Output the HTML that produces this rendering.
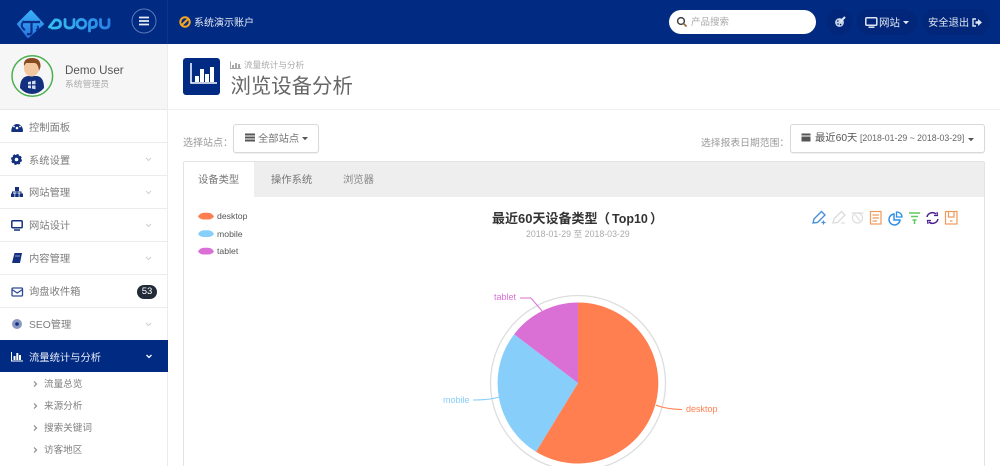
<!DOCTYPE html>
<html lang="zh"><head><meta charset="utf-8"><style>
*{box-sizing:border-box}
html,body{margin:0;padding:0;width:1000px;height:466px;overflow:hidden;background:#fff}
body{font-family:"Liberation Sans","Noto Sans CJK SC",sans-serif;position:relative;color:#666;font-size:10.3px}
.a{position:absolute;white-space:nowrap}
svg{position:absolute;overflow:visible}
.top{left:0;top:0;width:1000px;height:44px;background:#012a82}
.row{position:absolute;left:0;width:167px;height:33px;border-bottom:1px solid #ececec}
.row .t{position:absolute;left:29px;top:10px;font-size:10.3px;line-height:15px;color:#7d7d7d;white-space:nowrap}
.row svg{left:0;top:0}
.sub{position:absolute;left:44px;font-size:9.6px;line-height:14px;color:#808080;white-space:nowrap}
.pill{position:absolute;background:#02277a;border-radius:14px;height:26px;top:9px}
.btn{position:absolute;background:#fff;border:1px solid #d8d8d8;border-radius:3px;box-shadow:0 1px 1px rgba(0,0,0,.06)}
</style></head><body>
<div class="a top"></div>
<div class="a" style="left:167px;top:0;width:1px;height:44px;background:#123684"></div>
<!-- logo -->
<svg style="left:0;top:0" width="168" height="44">
<defs>
<linearGradient id="lg" gradientUnits="userSpaceOnUse" x1="48" y1="0" x2="110" y2="0"><stop offset="0" stop-color="#35c4f2"/><stop offset="1" stop-color="#2a7fe8"/></linearGradient>
<linearGradient id="dg" gradientUnits="userSpaceOnUse" x1="31" y1="10" x2="29" y2="38"><stop offset="0" stop-color="#38b2f6"/><stop offset="1" stop-color="#2a74e4"/></linearGradient>
</defs>
<path d="M31 11 L43 24 L28 37 L18 24 Z" fill="url(#dg)" stroke="url(#dg)" stroke-width="2" stroke-linejoin="round"/>
<path d="M24 22 H40 M31.500 22 V32 Q31.500 35 27 34" fill="none" stroke="#0a2f88" stroke-width="2.200"/>
<path d="M24 21 Q19 26 25 30" fill="none" stroke="#0a2f88" stroke-width="2"/>
<path d="M37 26 Q40 28 36 30" fill="none" stroke="#0a2f88" stroke-width="1.600"/>
<g fill="none" stroke="url(#lg)" stroke-width="2.800" stroke-linecap="round" stroke-linejoin="round">
<path d="M49.500 27 L55 20 Q60.500 19.500 60.500 24 Q60.500 28 55 28 H52"/>
<path d="M65 19.500 V24 Q65 28 69.500 28 Q74 28 74 24 V19.500"/>
<circle cx="81.500" cy="23.800" r="4.400"/>
<path d="M89.500 31 V24 Q89.500 19.500 93 19.500 Q96.500 19.500 96.500 23.500 Q96.500 27.500 92 27.500"/>
<path d="M100.500 19.500 V24 Q100.500 28 105 28 Q109 28 109 24 V19.500"/>
</g>
<circle cx="144" cy="21" r="12" fill="none" stroke="#5a78b8" stroke-width="1"/>
<path d="M139 17.500 H149 M139 21 H149 M139 24.500 H149" stroke="#e8eefa" stroke-width="1.800"/>
</svg>
<!-- warning -->
<svg style="left:179px;top:16px" width="12" height="12"><circle cx="6" cy="6" r="4.700" fill="none" stroke="#f5a623" stroke-width="2"/><path d="M3 9 L9 3" stroke="#f5a623" stroke-width="2"/></svg>
<div class="a" style="left:194px;top:16px;font-size:10px;line-height:15px;color:#e4e9f4">系统演示账户</div>
<!-- search -->
<div class="a" style="left:669px;top:10px;width:147px;height:24px;background:#fff;border-radius:12px"></div>
<svg style="left:676px;top:16px" width="12" height="12"><circle cx="5" cy="5" r="3.400" fill="none" stroke="#444" stroke-width="1.500"/><path d="M7.500 7.500 L10.500 10.500" stroke="#9a6a3a" stroke-width="1.800"/></svg>
<div class="a" style="left:691px;top:16px;font-size:9.500px;line-height:14px;color:#aaa">产品搜索</div>
<div class="pill" style="left:826px;width:26px"></div>
<div class="pill" style="left:857px;width:60px"></div>
<div class="pill" style="left:922px;width:68px"></div>
<svg style="left:834px;top:16px" width="12" height="12"><circle cx="5.500" cy="6.500" r="4.400" fill="#c5d2e8"/><path d="M6 6 L11 1" stroke="#dfe6f3" stroke-width="2"/><circle cx="3.800" cy="5" r=".8" fill="#02246f"/><circle cx="4" cy="8" r=".8" fill="#02246f"/><circle cx="6.600" cy="8.600" r=".8" fill="#02246f"/></svg>
<svg style="left:865px;top:17px" width="13" height="12"><rect x=".8" y=".8" width="11" height="7.500" rx="1" fill="none" stroke="#dfe6f3" stroke-width="1.500"/><path d="M3.500 10.200 H9.500" stroke="#dfe6f3" stroke-width="1.500"/></svg>
<div class="a" style="left:879px;top:16px;font-size:10.500px;line-height:15px;color:#dfe6f3">网站</div>
<svg style="left:903px;top:21px" width="6" height="4"><path d="M0 0 H6 L3 3.200Z" fill="#dfe6f3"/></svg>
<div class="a" style="left:928px;top:16px;font-size:10.300px;line-height:15px;color:#dfe6f3">安全退出</div>
<svg style="left:972px;top:18px" width="10" height="10"><path d="M4 1 H1 V8 H4" fill="none" stroke="#dfe6f3" stroke-width="1.400"/><path d="M3.500 3.200 H6 V1 L10 4.500 L6 8 V5.800 H3.500Z" fill="#dfe6f3"/></svg>

<!-- sidebar -->
<div class="a" style="left:0;top:44px;width:167px;height:66px;background:#f6f6f6;border-bottom:1px solid #e8e8e8"></div>
<div class="a" style="left:167px;top:44px;width:1px;height:422px;background:#ececec"></div>
<svg style="left:11px;top:55px" width="43" height="43">
<path d="M9 33 Q9 22 17 21 H26 Q33 22 33 33 Q28 39 21 39 Q14 39 9 33Z" fill="#12307f"/>
<ellipse cx="20.500" cy="13" rx="7.500" ry="8.500" fill="#f3c79f"/>
<path d="M13 11 Q12 3 21 3 Q30 3 29.500 12 L28 16 Q27.500 9 24 8 H15Z" fill="#8a4a20"/>
<path d="M17 27 l3 -.6 v3 h-3z M21 26.200 l3.500 -.7 v3.700 h-3.500z M17 30.500 h3 v3 l-3 -.6z M21 30.500 h3.500 v3.800 l-3.500 -.7z" fill="#d4def0"/>
<circle cx="21.300" cy="21" r="20.300" fill="none" stroke="#4cb050" stroke-width="1.500"/>
</svg>
<div class="a" style="left:65px;top:63px;font-size:11.600px;line-height:15px;color:#555">Demo User</div>
<div class="a" style="left:65px;top:77px;font-size:8.800px;line-height:14px;color:#aaa">系统管理员</div>

<div class="row" style="top:110px"><div class="t" style="top:11px">控制面板</div><svg width="30" height="33"><path d="M11.500 22 A5.800 6.500 0 1 1 22.800 22Z" fill="#12307f"/><circle cx="17" cy="18" r="1.300" fill="#fff"/><circle cx="14" cy="16.500" r=".9" fill="#fff"/><circle cx="20" cy="16.500" r=".9" fill="#fff"/></svg></div>
<div class="row" style="top:143px"><div class="t" style="top:11px">系统设置</div><svg width="168" height="33"><circle cx="16.500" cy="16.500" r="3.300" fill="none" stroke="#12307f" stroke-width="3"/><circle cx="16.500" cy="16.500" r="4.700" fill="none" stroke="#12307f" stroke-width="1.600" stroke-dasharray="2 1.700"/><path d="M146 15 L148.500 17.500 L151 15" fill="none" stroke="#d0d0d0"/></svg></div>
<div class="row" style="top:176px"><div class="t">网站管理</div><svg width="168" height="33"><rect x="15" y="11" width="4" height="4" fill="#12307f"/><rect x="11" y="17.500" width="3.500" height="3.500" fill="#12307f"/><rect x="15.200" y="17.500" width="3.500" height="3.500" fill="#12307f"/><rect x="19.500" y="17.500" width="3.500" height="3.500" fill="#12307f"/><path d="M12.500 17.500 V16 H21 V17.500 M17 15 V17.500" stroke="#12307f" fill="none"/><path d="M146 15 L148.500 17.500 L151 15" fill="none" stroke="#d0d0d0"/></svg></div>
<div class="row" style="top:209px"><div class="t">网站设计</div><svg width="168" height="33"><rect x="11.800" y="11.700" width="10.400" height="7" rx="1" fill="none" stroke="#12307f" stroke-width="1.500"/><path d="M14 21 H20" stroke="#12307f" stroke-width="1.500"/><path d="M146 15 L148.500 17.500 L151 15" fill="none" stroke="#d0d0d0"/></svg></div>
<div class="row" style="top:242px"><div class="t">内容管理</div><svg width="168" height="33"><path d="M14.500 11 H22 L20 21 H12Z" fill="#12307f"/><path d="M15 14 H20" stroke="#8fa2cf"/><path d="M146 15 L148.500 17.500 L151 15" fill="none" stroke="#d0d0d0"/></svg></div>
<div class="row" style="top:275px"><div class="t">询盘收件箱</div><svg width="30" height="33"><rect x="12" y="13" width="10.500" height="8" rx="1" fill="none" stroke="#2c4a94" stroke-width="1.300"/><path d="M12 14.500 L17.200 18 L22.500 14.500" fill="none" stroke="#2c4a94" stroke-width="1.200"/></svg></div>
<div class="a" style="left:137px;top:285px;width:20px;height:14px;border-radius:7px;background:#222b38;color:#fff;font-size:9.500px;line-height:14px;text-align:center">53</div>
<div class="row" style="top:308px;height:32px;border-bottom:0"><div class="t">SEO管理</div><svg width="168" height="33"><circle cx="17" cy="16" r="5" fill="#8a99c2"/><circle cx="17" cy="16" r="1.800" fill="#12307f"/><path d="M146 15 L148.500 17.500 L151 15" fill="none" stroke="#d0d0d0"/></svg></div>
<div class="a" style="left:0;top:340px;width:168px;height:32px;background:#012a82"></div>
<svg style="left:0;top:340px" width="168" height="32"><path d="M11.500 12 V21 H23" fill="none" stroke="#fff" stroke-width="1"/><path d="M13.500 16h2v4h-2zM16.300 13h2v7h-2zM19 15h2v5h-2z" fill="#fff"/><path d="M146.500 15 L149 17.500 L151.500 15" fill="none" stroke="#fff" stroke-width="1.300"/></svg>
<div class="a" style="left:29px;top:351px;font-size:10.300px;line-height:15px;color:#e8edf7">流量统计与分析</div>
<svg style="left:0;top:0" width="60" height="466"><path d="M34 381.500 L36.500 384 L34 386.500 M34 403.500 L36.500 406 L34 408.500 M34 425.500 L36.500 428 L34 430.500 M34 447.500 L36.500 450 L34 452.500" fill="none" stroke="#888" stroke-width="1.200"/></svg>
<div class="sub" style="top:378px">流量总览</div>
<div class="sub" style="top:400px">来源分析</div>
<div class="sub" style="top:422px">搜索关键词</div>
<div class="sub" style="top:444px">访客地区</div>

<!-- header -->
<div class="a" style="left:168px;top:109px;width:832px;height:1px;background:#efefef"></div>
<div class="a" style="left:183px;top:58px;width:37px;height:37px;background:#012a82;border-radius:3px"></div>
<svg style="left:183px;top:58px" width="37" height="37"><path d="M8 5 V25 H34" fill="none" stroke="#fff" stroke-width="1.500"/><path d="M12 18h4v6h-4zM17 11h4v13h-4zM22 16h4v8h-4zM27 9h4v15h-4z" fill="#fff"/></svg>
<svg style="left:230px;top:61px" width="12" height="9"><path d="M.5 .5 V7.500 H11" fill="none" stroke="#aaa"/><path d="M2 4h2v3H2zM5 2h2v5H5zM8 3h2v4H8z" fill="#aaa"/></svg>
<div class="a" style="left:244px;top:59px;font-size:8.600px;line-height:13px;color:#aaa">流量统计与分析</div>
<div class="a" style="left:230.500px;top:73px;font-size:20.400px;line-height:28px;color:#666">浏览设备分析</div>

<!-- filters -->
<div class="a" style="left:183px;top:136px;font-size:10px;line-height:15px;color:#999">选择站点：</div>
<div class="btn" style="left:233px;top:124px;width:86px;height:29px"></div>
<svg style="left:245px;top:133px" width="10" height="9"><path d="M0 .5h10v2H0zM0 3.500h10v2H0zM0 6.500h10v2H0z" fill="#555"/></svg>
<div class="a" style="left:258px;top:132px;font-size:10.300px;line-height:15px;color:#777">全部站点</div>
<svg style="left:302px;top:137px" width="6" height="4"><path d="M0 0 H6 L3 3.200Z" fill="#555"/></svg>
<div class="a" style="left:701px;top:136px;font-size:9.800px;line-height:15px;color:#999">选择报表日期范围：</div>
<div class="btn" style="left:790px;top:124px;width:195px;height:29px"></div>
<svg style="left:801px;top:132px" width="10" height="10"><path d="M.5 1.500h9v8h-9z" fill="#555"/><path d="M.5 4 h9" stroke="#fff"/></svg>
<div class="a" style="left:815px;top:131px;font-size:10.300px;line-height:15px;color:#555">最近60天</div>
<div class="a" style="left:860px;top:132px;font-size:8.750px;line-height:13px;color:#666">[2018-01-29 ~ 2018-03-29]</div>
<svg style="left:968px;top:138px" width="6" height="4"><path d="M0 0 H6 L3 3.200Z" fill="#555"/></svg>

<!-- tabs -->
<div class="a" style="left:183px;top:161px;width:802px;height:305px;border:1px solid #e3e3e3;border-bottom:0;border-radius:2px 2px 0 0"></div>
<div class="a" style="left:184px;top:162px;width:800px;height:35px;background:#eeeeee"></div>
<div class="a" style="left:184px;top:162px;width:70px;height:35px;background:#fff"></div>
<div class="a" style="left:198px;top:173px;font-size:10.300px;line-height:15px;color:#777">设备类型</div>
<div class="a" style="left:271px;top:173px;font-size:10.300px;line-height:15px;color:#777">操作系统</div>
<div class="a" style="left:343px;top:173px;font-size:10.300px;line-height:15px;color:#888">浏览器</div>

<!-- legend -->
<svg style="left:198px;top:210px" width="18" height="50">
<path d="M0 6.500 Q2 3 6 2.800 H10 Q14 3 16 6.500 Q14 9.500 10 9.500 H6 Q2 9.500 0 6.500Z" fill="#ff7f50"/>
<path d="M0 24 Q2 20.500 6 20.300 H10 Q14 20.500 16 24 Q14 27 10 27 H6 Q2 27 0 24Z" fill="#87cefa"/>
<path d="M0 41.500 Q2 38 6 37.800 H10 Q14 38 16 41.500 Q14 44.500 10 44.500 H6 Q2 44.500 0 41.500Z" fill="#da70d6"/>
</svg>
<div class="a" style="left:217px;top:210px;font-size:8.700px;line-height:13px;color:#555">desktop</div>
<div class="a" style="left:217px;top:228px;font-size:8.700px;line-height:13px;color:#555">mobile</div>
<div class="a" style="left:217px;top:245px;font-size:8.700px;line-height:13px;color:#555">tablet</div>

<!-- title -->
<div class="a" style="left:492px;top:210px;font-size:13px;line-height:18px;font-weight:bold;color:#333">最近60天设备类型</div>
<div class="a" style="left:597px;top:210px;font-size:13px;line-height:18px;font-weight:bold;color:#333">（</div>
<div class="a" style="left:612px;top:210px;font-size:12.500px;line-height:18px;font-weight:bold;color:#333">Top10</div>
<div class="a" style="left:650px;top:210px;font-size:13px;line-height:18px;font-weight:bold;color:#333">）</div>
<div class="a" style="left:526px;top:228px;font-size:8.800px;line-height:13px;color:#aaa">2018-01-29 至 2018-03-29</div>

<!-- toolbox -->
<svg style="left:812px;top:210px" width="150" height="16" fill="none" stroke-width="1.200">
<path d="M1 13 L2 9 L9.500 1.500 L13 5 L5.500 12.500 Z" stroke="#4a90d9" stroke-width="1.400"/><path d="M9.500 12.500 H13.500 M11.500 10.500 V14.500" stroke="#4a90d9"/>
<path d="M21 13 L22 9 L29.500 1.500 L33 5 L25.500 12.500 Z" stroke="#ddd" stroke-width="1.400"/><path d="M29 13 H33" stroke="#ddd"/>
<circle cx="45.500" cy="8" r="5" stroke="#ddd"/><path d="M39.500 3 H51.500 M43.500 5 L48 11" stroke="#ddd"/>
<rect x="58.500" y="1.500" width="10.500" height="12.500" stroke="#ef9a5c"/><path d="M60.500 5 H67 M60.500 8 H67 M60.500 11 H65" stroke="#ef9a5c"/>
<path d="M82 4 A5.500 5.500 0 1 0 88 10 H82Z" stroke="#2f8fe8" stroke-width="1.500"/><path d="M84.500 2 A5 5 0 0 1 90 7 H84.500Z" stroke="#2f8fe8" stroke-width="1.300"/>
<path d="M97 3 H108 M99 6.500 H106 M100.500 10 H104.500 M102.500 10 V14" stroke="#5fc95f" stroke-width="1.500"/>
<path d="M115 7 A5.500 5.500 0 0 1 124 4 M126 9 A5.500 5.500 0 0 1 117 12" stroke="#4b1d91" stroke-width="1.500"/><path d="M122 5.500 L125.500 5.500 L125 2 M119 10.500 L115.500 10.500 L116 14" stroke="#4b1d91"/>
<rect x="133.500" y="1.500" width="11.500" height="12.500" stroke="#ef9a5c"/><path d="M136.500 1.500 V7 H142 V1.500 M138 11 H140.500" stroke="#ef9a5c"/>
</svg>

<!-- pie -->
<svg style="left:0;top:0" width="1000" height="466">
<circle cx="578" cy="383" r="87.500" fill="none" stroke="#dedede" stroke-width="1.300"/>
<path d="M578 383 V302.500 A80.500 80.500 0 1 1 536 451.800 Z" fill="#ff7f50"/>
<path d="M578 383 L536 451.800 A80.500 80.500 0 0 1 514.200 334.200 Z" fill="#87cefa"/>
<path d="M578 383 L514.200 334.200 A80.500 80.500 0 0 1 578 302.500 Z" fill="#da70d6"/>
<path d="M656 405 Q665 409 682 409.500" fill="none" stroke="#ff7f50"/>
<path d="M499 397 Q490 400 473 400" fill="none" stroke="#87cefa"/>
<path d="M542 311 L531 298 H520" fill="none" stroke="#da70d6"/>
</svg>
<div class="a" style="left:686px;top:403px;font-size:9px;line-height:13px;color:#ff7f50">desktop</div>
<div class="a" style="left:443px;top:394px;font-size:9px;line-height:13px;color:#87cefa">mobile</div>
<div class="a" style="left:494px;top:291px;font-size:9px;line-height:13px;color:#da70d6">tablet</div>
</body></html>
